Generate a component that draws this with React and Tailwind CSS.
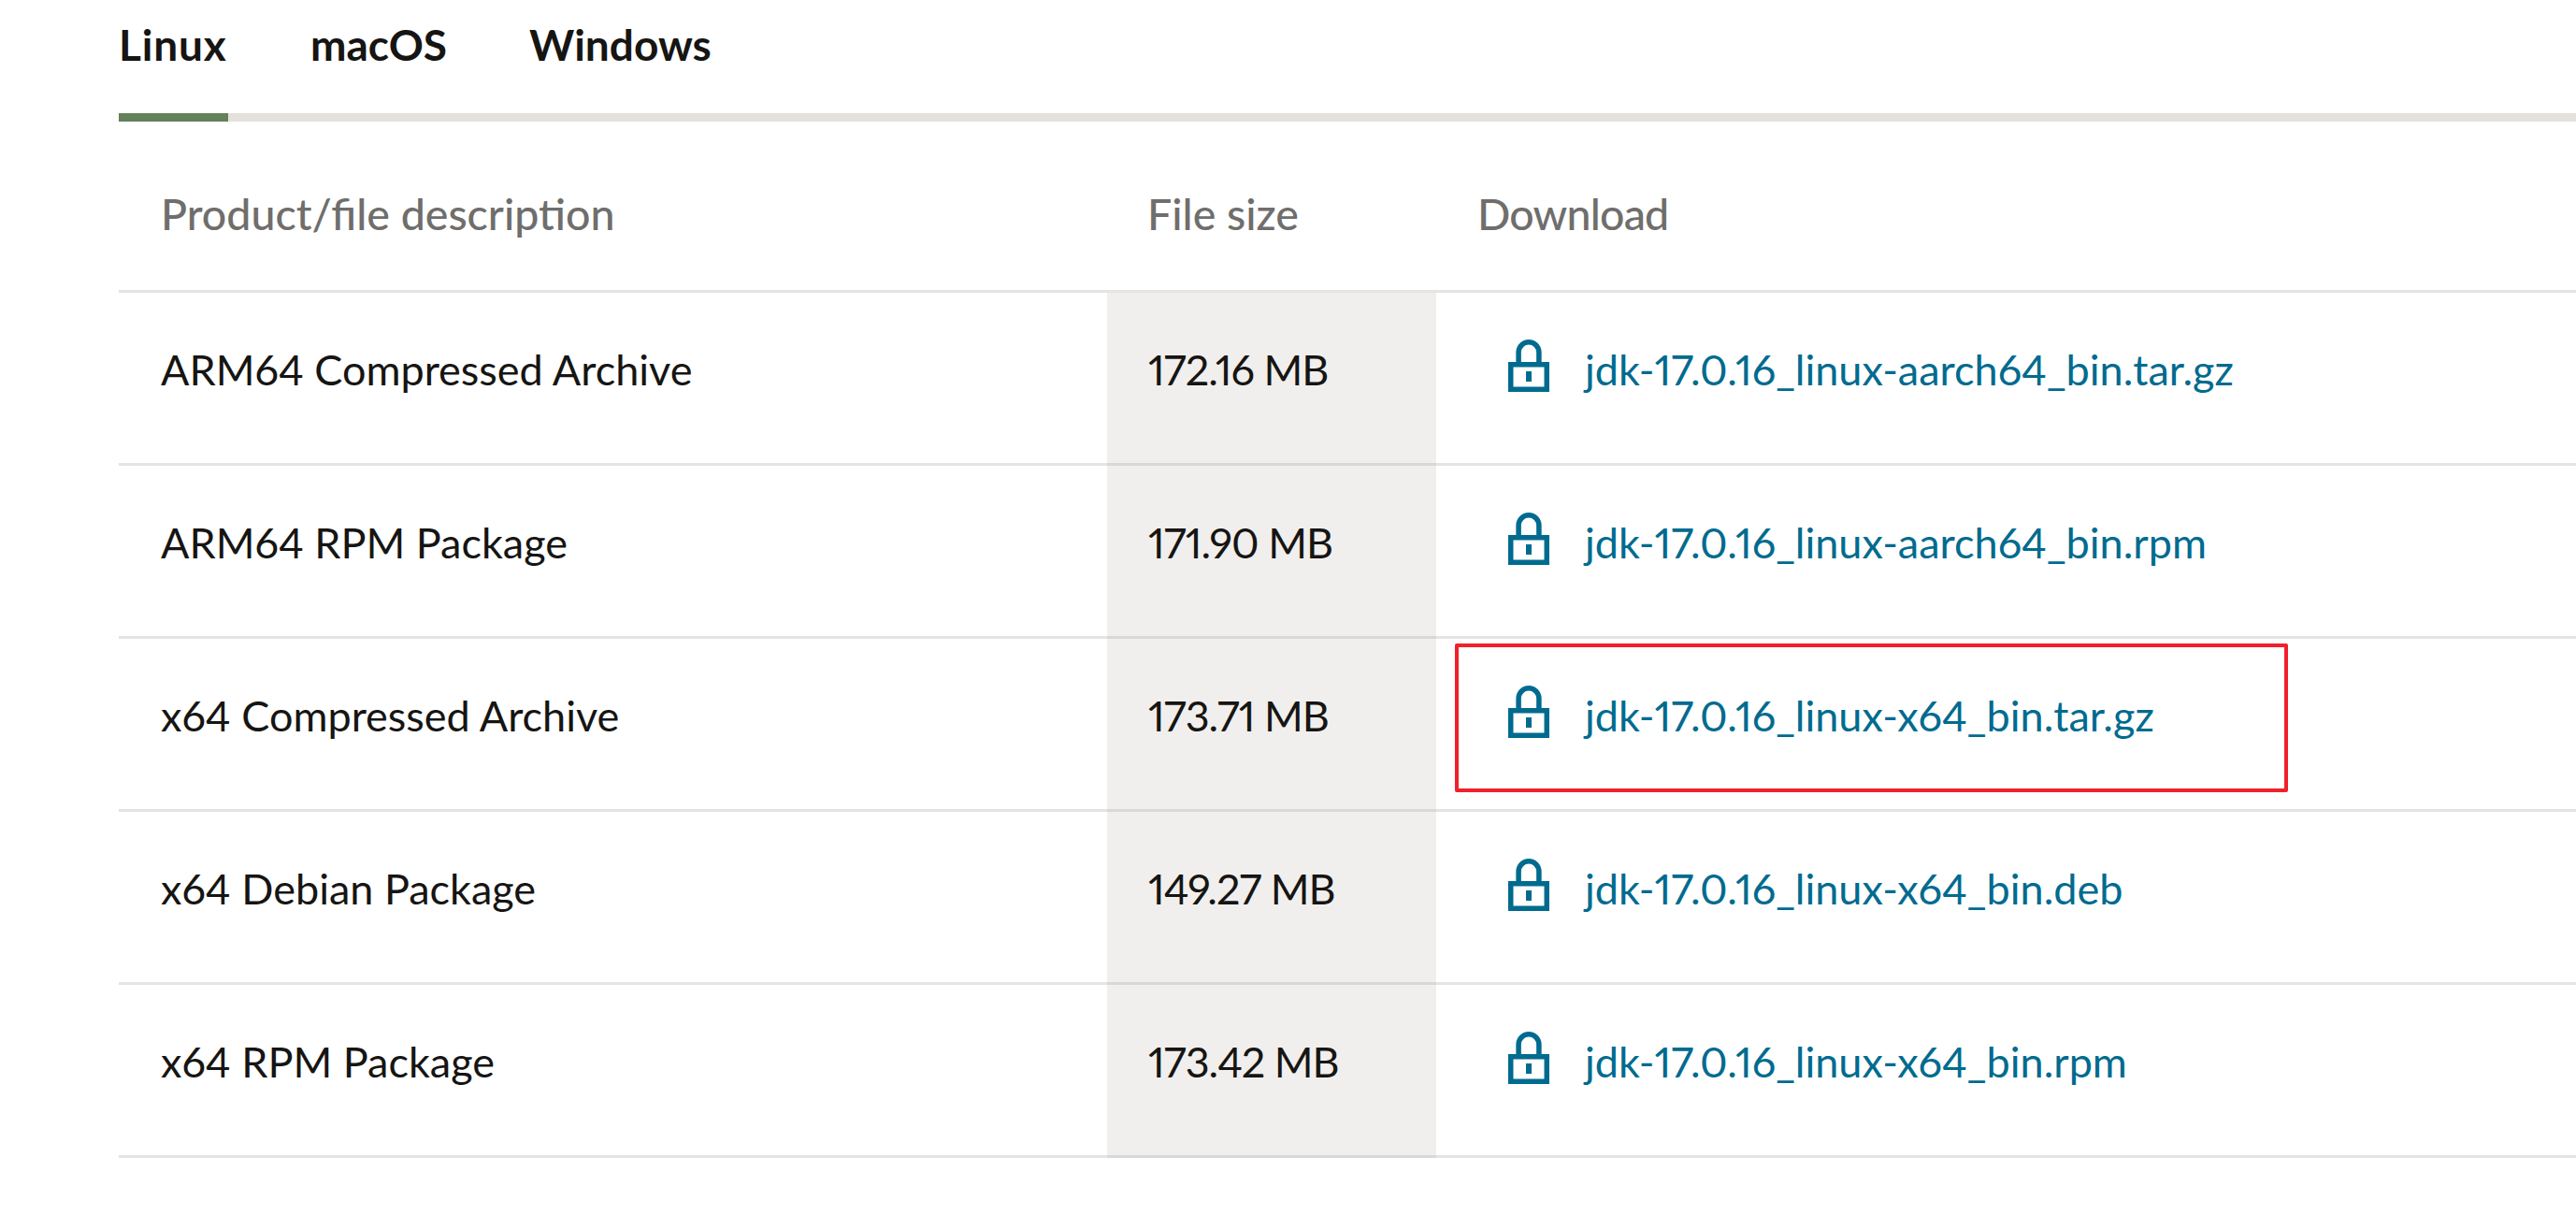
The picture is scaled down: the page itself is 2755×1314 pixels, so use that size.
const rows = [
  { name: 'ARM64 Compressed Archive', size: '172.16 MB', file: 'jdk-17.0.16_linux-aarch64_bin.tar.gz' },
  { name: 'ARM64 RPM Package', size: '171.90 MB', file: 'jdk-17.0.16_linux-aarch64_bin.rpm' },
  { name: 'x64 Compressed Archive', size: '173.71 MB', file: 'jdk-17.0.16_linux-x64_bin.tar.gz', marked: true },
  { name: 'x64 Debian Package', size: '149.27 MB', file: 'jdk-17.0.16_linux-x64_bin.deb' },
  { name: 'x64 RPM Package', size: '173.42 MB', file: 'jdk-17.0.16_linux-x64_bin.rpm' },
];

function LockIcon() {
  return (
    <svg width="44" height="56" viewBox="0 0 44 56" className="shrink-0 mb-[26px] text-[#006b8f]">
      <path d="M11.1 25V13.65a10.9 10.9 0 0 1 21.8 0V25" fill="none" stroke="currentColor" strokeWidth="5.5" />
      <rect x="2.75" y="26.75" width="38.5" height="26.5" fill="none" stroke="currentColor" strokeWidth="5.5" />
      <rect x="19" y="34" width="6" height="11" fill="currentColor" />
    </svg>
  );
}

export default function App() {
  return (
    <div className="w-[2755px] h-[1314px] bg-white pl-[127px] overflow-hidden font-['Lato','Noto_Sans',sans-serif] text-[#161513] text-[45px] proportional-nums">
      <div className="flex gap-[88px] h-[130px] border-b-[9px] border-[#e4e1dc] font-bold text-[46px]">
        <div className="w-[117px] h-[130px] pt-[20px] border-b-[9px] border-[#64815a] leading-[56px] tracking-[0.8px]">Linux</div>
        <div className="pt-[20px] leading-[56px]">macOS</div>
        <div className="pt-[20px] leading-[56px]">Windows</div>
      </div>
      <div className="flex h-[183px] items-center pt-[18px] border-b-[3px] border-[#e4e4e4] text-[#6f6e6c] text-[46.5px] font-medium">
        <div className="w-[1057px] pl-[45px]">Product/file description</div>
        <div className="w-[352px] pl-[43px]">File size</div>
        <div className="pl-[44px] tracking-[-0.8px]">Download</div>
      </div>
      {rows.map((row) => (
        <div key={row.file} className="flex h-[185px] items-stretch">
          <div className="w-[1057px] pl-[45px] pb-[16px] flex items-center border-b-[3px] border-[#e4e4e4]">{row.name}</div>
          <div className="w-[352px] pl-[44px] pb-[16px] flex items-center bg-[#f1efed] border-b-[3px] border-[#d9d8d6] tracking-[-1px]">{row.size}</div>
          <div className="relative flex-1 flex items-center pl-[77px] gap-[38px] text-[#006b8f] border-b-[3px] border-[#e4e4e4]">
            <LockIcon />
            <span className="mb-[16px]">{row.file}</span>
            {row.marked && (
              <div className="absolute left-[20px] top-[5px] w-[891px] h-[159px] border-[4px] border-[#f0202c] rounded-[2px]" />
            )}
          </div>
        </div>
      ))}
    </div>
  );
}
